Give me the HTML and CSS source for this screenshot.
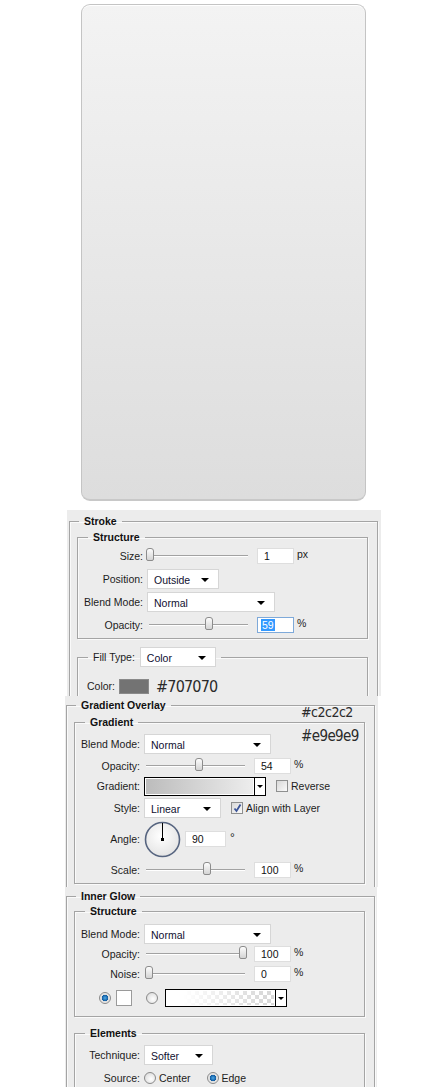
FILE: index.html
```html
<!DOCTYPE html>
<html lang="en">
<head>
  <meta charset="UTF-8" />
  <meta name="viewport" content="width=device-width, initial-scale=1.0"/>
  <title>Button Layer Style</title>

  <link rel="stylesheet" href="styles.css">
</head>
<body>
  <div class="page">

    <!-- the finished button shape -->
    <div class="card"></div>

    <!-- Stroke -->
    <section class="panel panel-stroke">
      <fieldset class="group outer">
        <legend>Stroke</legend>
        <fieldset class="group inner gap-3">
          <legend>Structure</legend>
          <div class="row">
            <span class="lbl">Size:</span>
            <span class="slider"><i class="thumb" style="left:1%"></i></span>
            <span class="field">1</span><span class="unit">px</span>
          </div>
          <div class="row">
            <span class="lbl">Position:</span>
            <span class="select w-72">Outside</span>
          </div>
          <div class="row">
            <span class="lbl">Blend Mode:</span>
            <span class="select w-128">Normal</span>
          </div>
          <div class="row">
            <span class="lbl">Opacity:</span>
            <span class="slider"><i class="thumb" style="left:61%"></i></span>
            <span class="field focus"><span class="picked">59</span></span><span class="unit">%</span>
          </div>
        </fieldset>
        <fieldset class="group inner fill">
          <legend><span class="legend-lbl">Fill Type:</span><span class="select w-76">Color</span></legend>
          <div class="row color-row">
            <span>Color:</span>
            <span class="swatch"></span>
            <span class="hex">#707070</span>
          </div>
        </fieldset>
      </fieldset>
    </section>

    <!-- Gradient Overlay -->
    <section class="panel panel-gradient">
      <fieldset class="group outer">
        <legend>Gradient Overlay</legend>
        <fieldset class="group inner gap-2">
          <legend>Gradient</legend>
          <div class="row">
            <span class="lbl">Blend Mode:</span>
            <span class="select w-127">Normal</span>
          </div>
          <div class="row">
            <span class="lbl">Opacity:</span>
            <span class="slider"><i class="thumb" style="left:54%"></i></span>
            <span class="field">54</span><span class="unit">%</span>
          </div>
          <div class="row grad-row">
            <span class="lbl">Gradient:</span>
            <span class="grad-pick w-122">
              <span class="grad-fill"></span>
              <span class="grad-arrow"></span>
            </span>
            <span class="check"></span><span class="check-lbl">Reverse</span>
          </div>
          <div class="row">
            <span class="lbl">Style:</span>
            <span class="select w-77">Linear</span>
            <span class="check checked">
              <svg width="11" height="11" viewBox="0 0 11 11"><path d="M2.5 5.5 L4.5 8 L8.5 1.5" fill="none" stroke="#3b5498" stroke-width="1.8"/></svg>
            </span><span class="check-lbl">Align with Layer</span>
          </div>
          <div class="row angle-row">
            <span class="lbl">Angle:</span>
            <svg class="dial" width="37" height="37" viewBox="0 0 37 37">
              <defs>
                <radialGradient id="dialFill" cx="45%" cy="40%" r="65%">
                  <stop offset="0" stop-color="#ffffff"/>
                  <stop offset="1" stop-color="#e2e2e2"/>
                </radialGradient>
              </defs>
              <circle cx="18.5" cy="18.5" r="17" fill="url(#dialFill)" stroke="#56647f" stroke-width="1.6"/>
              <line x1="18.5" y1="2" x2="18.5" y2="18.5" stroke="#000" stroke-width="1"/>
              <rect x="17" y="17" width="3" height="3" fill="#000"/>
            </svg>
            <span class="field w-41">90</span><span class="deg">°</span>
          </div>
          <div class="row">
            <span class="lbl">Scale:</span>
            <span class="slider"><i class="thumb" style="left:62%"></i></span>
            <span class="field">100</span><span class="unit">%</span>
          </div>
        </fieldset>
      </fieldset>
      <span class="note note-top">#c2c2c2</span>
      <span class="note note-bottom">#e9e9e9</span>
    </section>

    <!-- Inner Glow -->
    <section class="panel panel-glow">
      <fieldset class="group outer">
        <legend>Inner Glow</legend>
        <fieldset class="group inner gap-0">
          <legend>Structure</legend>
          <div class="row">
            <span class="lbl">Blend Mode:</span>
            <span class="select w-127">Normal</span>
          </div>
          <div class="row">
            <span class="lbl">Opacity:</span>
            <span class="slider"><i class="thumb" style="left:98%"></i></span>
            <span class="field">100</span><span class="unit">%</span>
          </div>
          <div class="row">
            <span class="lbl">Noise:</span>
            <span class="slider"><i class="thumb" style="left:3%"></i></span>
            <span class="field">0</span><span class="unit">%</span>
          </div>
          <div class="row glow-src">
            <span class="radio on"></span>
            <span class="swatch white"></span>
            <span class="radio"></span>
            <span class="grad-pick w-122">
              <span class="grad-fill checker"></span>
              <span class="grad-arrow"></span>
            </span>
          </div>
        </fieldset>
        <fieldset class="group inner elements gap-3">
          <legend>Elements</legend>
          <div class="row">
            <span class="lbl">Technique:</span>
            <span class="select w-69">Softer</span>
          </div>
          <div class="row">
            <span class="lbl">Source:</span>
            <span class="radio"></span><span class="radio-lbl">Center</span>
            <span class="radio on"></span><span class="radio-lbl">Edge</span>
          </div>
        </fieldset>
      </fieldset>
    </section>

  </div>
</body>
</html>
```

FILE: styles.css
```css
body {
  margin: 0;
  background: #fff;
  font-family: "Liberation Sans", Arial, sans-serif;
  font-size: 10.5px;
  color: #1c1c1c;
}
.page {
  display: flex;
  flex-direction: column;
  align-items: flex-start;
  padding-top: 4px;
}

/* button preview */
.card {
  margin-left: 81px;
  width: 285px;
  height: 497px;
  box-sizing: border-box;
  border: 1px solid #c4c4c4;
  border-bottom: 2px solid #c8c8c8;
  border-radius: 9px;
  background: linear-gradient(#f3f3f3, #dddddd);
  box-shadow: inset 0 1px 0 #fff;
}

/* dialog panels */
.panel {
  position: relative;
  background: #ececec;
  overflow: hidden;
  box-sizing: border-box;
}
.panel-stroke {
  margin-top: 9px;
  margin-left: 67px;
  width: 314px;
  height: 186px;
  padding: 4px 0 0 2px;
}
.panel-gradient {
  margin-left: 65px;
  width: 313px;
  height: 191px;
  padding: 2px 0 0 1px;
}
.panel-glow {
  margin-left: 65px;
  width: 312px;
  height: 200px;
  padding: 2px 0 0 1px;
}

.group {
  margin: 0;
  min-width: 0;
  border: 1px solid #a4a4a4;
  box-shadow: inset 1px 1px 0 #fafafa, 1px 1px 0 #fafafa;
}
.group legend {
  padding: 0 5px;
  line-height: 14px;
  font-weight: bold;
  color: #111;
}
.outer {
  width: 309px;
  box-sizing: border-box;
  padding: 0 9px 40px 7px;
}
.outer > legend {
  margin-left: 2px;
}
.inner {
  padding: 0 6px 3px 10px;
}
.outer > .inner:first-of-type {
  margin-top: 2px;
  padding-top: 2px;
}
.panel-gradient .outer > .inner:first-of-type {
  margin-top: 3px;
  padding-top: 5px;
}
.panel-glow .outer > .inner:first-of-type {
  margin-top: 1px;
  padding-top: 6px;
  padding-bottom: 8px;
}

.row {
  display: flex;
  align-items: center;
  height: 20px;
}
.gap-3 .row + .row { margin-top: 3px; }
.gap-2 .row + .row { margin-top: 2px; }
.gap-0 .row + .row { margin-top: 0; }
.gap-2 .grad-row { margin-top: 0 !important; }

/* right-aligned labels; long ones spill to the left */
.lbl {
  display: flex;
  justify-content: flex-end;
  flex: none;
  width: 55px;
  margin-right: 4px;
  white-space: nowrap;
}

/* sliders */
.slider {
  position: relative;
  flex: none;
  width: 99px;
  height: 1px;
  margin-left: 2px;
  background: #a2a2a2;
  border-bottom: 1px solid #fff;
}
.thumb {
  position: absolute;
  top: -7px;
  width: 6px;
  height: 11px;
  margin-left: -4px;
  border: 1px solid #8c8c8c;
  border-radius: 3px 3px 2px 2px;
  background: linear-gradient(#fdfdfd, #d4d4d4);
}

/* text fields */
.field {
  flex: none;
  width: 37px;
  height: 16px;
  box-sizing: border-box;
  margin-left: 9px;
  padding-left: 6px;
  background: #fff;
  border: 1px solid #dedede;
  line-height: 14px;
  color: #111;
}
.field.focus {
  border-color: #7ea9d9;
  padding-left: 3px;
}
.picked {
  background: #3399ff;
  color: #fff;
  padding: 0 1px;
}
.unit {
  margin-left: 3px;
  align-self: flex-start;
  line-height: 16px;
}
.deg {
  margin-left: 4px;
  margin-top: -2px;
  font-size: 12px;
}

/* dropdowns */
.select {
  position: relative;
  flex: none;
  height: 20px;
  box-sizing: border-box;
  padding-left: 6px;
  background: #fff;
  border: 1px solid #d6d6d6;
  line-height: 20px;
  color: #101030;
  font-weight: normal;
}
.select::after {
  content: "";
  position: absolute;
  right: 9px;
  top: 8px;
  border-top: 4px solid #000;
  border-left: 4px solid transparent;
  border-right: 4px solid transparent;
}
.w-69 { width: 69px; }
.w-72 { width: 72px; }
.w-76 { width: 76px; }
.w-77 { width: 77px; }
.w-127 { width: 127px; }
.w-128 { width: 128px; }
.w-122 { width: 122px; }
.w-41 { width: 41px; margin-left: 4px; }

/* fill type */
.fill {
  margin-top: 8px;
  padding-top: 0;
}
.fill legend {
  display: flex;
  align-items: center;
  line-height: 20px;
  font-weight: normal;
  color: #1c1c1c;
}
.legend-lbl {
  margin-right: 5px;
}
.color-row {
  height: 18px;
  margin-top: 10px;
  margin-left: -1px;
}
.swatch {
  width: 30px;
  height: 15px;
  margin-left: 4px;
  box-sizing: border-box;
  background: #737373;
  border: 1px solid #8a8a8a;
}
.hex {
  margin-left: 7px;
  font-family: "DejaVu Sans Condensed", "DejaVu Sans", sans-serif;
  font-size: 16px;
  letter-spacing: -0.8px;
  color: #2a2a2a;
}

/* gradient pickers */
.grad-pick {
  display: flex;
  flex: none;
  height: 19px;
  box-sizing: border-box;
  border: 1px solid #000;
  background: #fff;
}
.grad-fill {
  flex: 1;
  margin: 1px;
  background: linear-gradient(90deg, #bcbcbc, #ededed);
}
.grad-fill.checker {
  background:
    linear-gradient(90deg, #fff 15%, rgba(255,255,255,0) 90%),
    repeating-conic-gradient(#d9d9d9 0 25%, #fff 0 50%) 0 0 / 8px 8px;
}
.grad-arrow {
  position: relative;
  width: 10px;
  border-left: 1px solid #000;
  background: #fff;
}
.grad-arrow::after {
  content: "";
  position: absolute;
  left: 2px;
  top: 7px;
  border-top: 3px solid #000;
  border-left: 3px solid transparent;
  border-right: 3px solid transparent;
}

/* checkboxes and radios */
.check {
  flex: none;
  width: 12px;
  height: 12px;
  box-sizing: border-box;
  margin-left: 10px;
  border: 1px solid #8e8f8f;
  background: linear-gradient(135deg, #d8d8d8, #fafafa);
}
.check svg {
  display: block;
}
.check-lbl {
  margin-left: 3px;
}
.radio {
  flex: none;
  width: 12px;
  height: 12px;
  box-sizing: border-box;
  border-radius: 50%;
  border: 1px solid #8a8a8a;
  background: radial-gradient(circle at 60% 60%, #fff, #d4d4d4);
}
.radio.on {
  background: radial-gradient(circle, #4fa9e6 0, #0e5aa0 3px, #dcdcdc 3.5px, #f4f4f4 6px);
}
.radio-lbl {
  margin-left: 3px;
}
.radio-lbl + .radio {
  margin-left: 16px;
}

.angle-row {
  height: 38px;
}
.dial {
  flex: none;
}
.angle-row .field {
  margin-top: -1px;
}

/* inner glow source row */
.glow-src {
  margin-top: 4px !important;
  padding-left: 14px;
}
.swatch.white {
  width: 16px;
  height: 16px;
  margin-left: 5px;
  background: #fff;
  border-color: #9a9a9a;
}
.glow-src .radio:not(.on) {
  margin-left: 14px;
}
.glow-src .grad-pick {
  margin-left: 7px;
  height: 18px;
}

.elements {
  margin-top: 9px;
  padding-top: 5px;
}

/* colour notes over the gradient panel */
.note {
  position: absolute;
  left: 236px;
  font-family: "DejaVu Sans Condensed", "DejaVu Sans", sans-serif;
  color: #2a2a2a;
  line-height: 1;
}
.note-top {
  top: 9px;
  font-size: 14px;
  letter-spacing: -0.5px;
}
.note-bottom {
  top: 33px;
  font-size: 15px;
  letter-spacing: -0.6px;
}
```
